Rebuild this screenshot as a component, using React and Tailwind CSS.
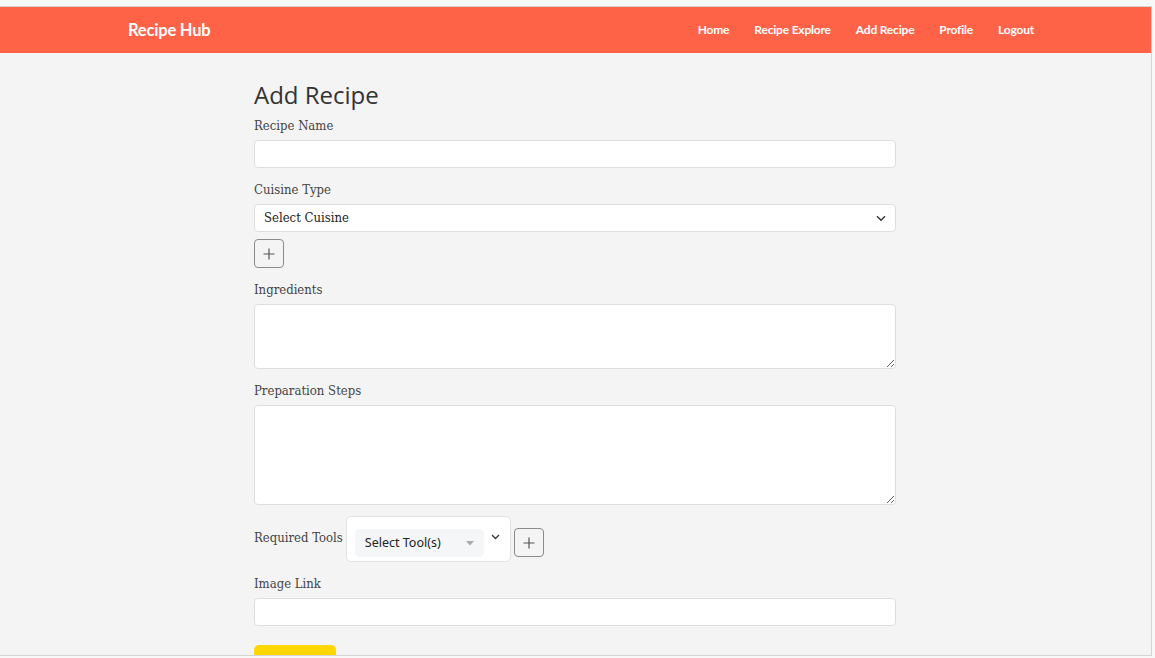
import React from 'react';

const labelCls = "block h-5 leading-[23px] text-[13px] text-[#444] mb-[6px] font-stretch-condensed";
const serif = { fontFamily: '"DejaVu Serif", serif' };
const inputCls = "block w-full h-[28px] bg-white border border-[#dedede] rounded-[4px] outline-none";

const PlusButton = () => (
    <button className="w-[30px] h-[29px] flex items-center justify-center border border-[#8a8a8a] rounded-[4px] bg-[#f4f4f4] text-[#555]">
        <svg width="12" height="12" viewBox="0 0 12 12" fill="none" stroke="#555" strokeWidth="1.2">
            <path d="M6 0.5v11M0.5 6h11" />
        </svg>
    </button>
);

const App = () => {
    const links = ['Home', 'Recipe Explore', 'Add Recipe', 'Profile', 'Logout'];

    return (
        <div className="w-[1155px] h-[658px] bg-[#f8f8f8] pt-[6px] overflow-hidden">
            <div className="w-[1152px] h-[650px] border-t border-r border-b border-[#d4d4d4] bg-[#f4f4f4] overflow-hidden flex flex-col">
                <nav className="h-[46px] shrink-0 bg-[#ff6347] flex items-center justify-between pl-[128px] pr-[117px]" style={{ fontFamily: 'Lato, sans-serif' }}>
                    <span className="text-white font-bold text-[16.5px] tracking-[-0.2px]">Recipe Hub</span>
                    <div className="flex gap-[25px]">
                        {links.map(l => (
                            <a key={l} className="text-white font-bold text-[12px] tracking-[-0.2px]">{l}</a>
                        ))}
                    </div>
                </nav>

                <main className="w-[642px] ml-[254px] pt-[26px]" style={serif}>
                    <h1 className="text-[24px] leading-[32px] text-[#333] font-medium mb-[3px]" style={{ fontFamily: '"Open Sans", sans-serif' }}>Add Recipe</h1>

                    <label className={labelCls}>Recipe Name</label>
                    <input className={inputCls} />

                    <label className={labelCls + " mt-[10px]"}>Cuisine Type</label>
                    <div className="relative">
                        <select className={inputCls + " appearance-none pl-[9px] text-[13px] text-[#222] font-stretch-condensed"} style={serif}>
                            <option>Select Cuisine</option>
                        </select>
                        <svg className="absolute right-[10px] top-[11px]" width="10" height="7" viewBox="0 0 10 7" fill="none" stroke="#333" strokeWidth="1.4">
                            <path d="M1 1.2l4 4 4-4" />
                        </svg>
                    </div>
                    <div className="mt-[7px]"><PlusButton /></div>

                    <label className={labelCls + " mt-[10px] mb-[5px]"}>Ingredients</label>
                    <textarea className="block w-full h-[65px] bg-white border border-[#dedede] rounded-[4px] outline-none" />

                    <label className={labelCls + " mt-[10px] mb-[5px]"}>Preparation Steps</label>
                    <textarea className="block w-full h-[100px] bg-white border border-[#dedede] rounded-[4px] outline-none" />

                    <div className="flex items-start mt-[11px]">
                        <span className="text-[13px] text-[#444] leading-5 mt-[12px] mr-[3px] font-stretch-condensed">Required Tools</span>
                        <div className="w-[165px] h-[46px] bg-white border border-[#e2e2e2] rounded-[5px] flex items-start pl-[8px] pt-[12px]">
                            <div className="w-[129px] h-[28px] bg-[#f5f6f8] rounded-[5px] flex items-center justify-between pl-[10px] pr-[10px]" style={{ fontFamily: '"Noto Sans", sans-serif' }}>
                                <span className="text-[12.5px] text-[#222]">Select Tool(s)</span>
                                <svg width="8" height="5" viewBox="0 0 8 5"><path d="M0 0h8L4 4.5z" fill="#aaa" /></svg>
                            </div>
                            <svg className="ml-[7px] mt-[5px]" width="9" height="6" viewBox="0 0 9 6" fill="none" stroke="#333" strokeWidth="1.3">
                                <path d="M1 1l3.5 3.5L8 1" />
                            </svg>
                        </div>
                        <div className="ml-[3px] mt-[12px]"><PlusButton /></div>
                    </div>

                    <label className={labelCls + " mt-[10px]"}>Image Link</label>
                    <input className={inputCls} />

                    <button className="mt-[19px] w-[82px] h-[34px] bg-[#ffd700] rounded-[5px] text-[13px] text-[#333]" style={{ fontFamily: '"Open Sans", sans-serif' }}>Add Recipe</button>
                </main>
            </div>
        </div>
    );
};

export default App;
